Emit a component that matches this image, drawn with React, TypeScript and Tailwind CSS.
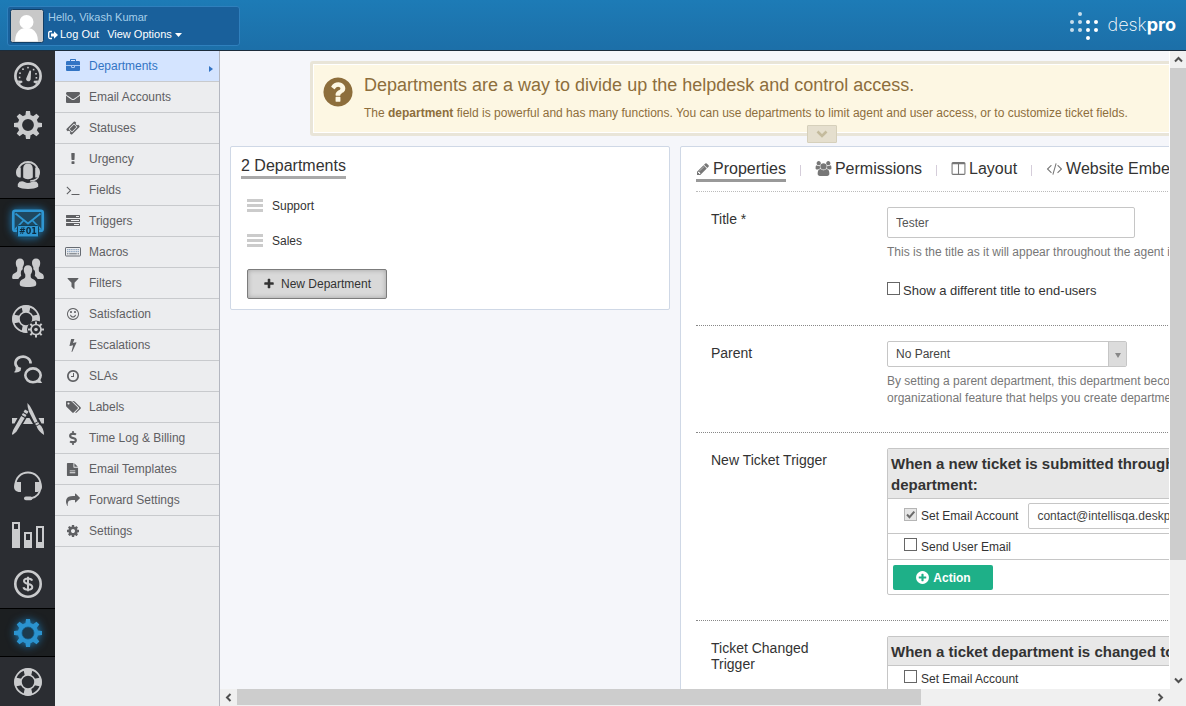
import React, { useState } from "react";
import { FaDollarSign } from "react-icons/fa";

const DISC =
  "M1664 896q0 209-103 385.5t-279.5 279.5-385.5 103-385.5-103-279.5-279.5-103-385.5 103-385.5 279.5-279.5 385.5-103 385.5 103 279.5 279.5 103 385.5z";

const PATHS = {
  briefcase:
    "M640 256h512v-128h-512v128zm1152 640v480q0 66-47 113t-113 47h-1472q-66 0-113-47t-47-113v-480h672v160q0 26 19 45t45 19h320q26 0 45-19t19-45v-160h672zm-768 0v128h-256v-128h256zm768-480v384h-1792v-384q0-66 47-113t113-47h352v-160q0-40 28-68t68-28h576q40 0 68 28t28 68v160h352q66 0 113 47t47 113z",
  envelope:
    "M1792 710v794q0 66-47 113t-113 47h-1472q-66 0-113-47t-47-113v-794q44 49 101 87 362 246 497 345 57 42 92.5 65.5t94.5 48 110 24.5h2q51 0 110-24.5t94.5-48 92.5-65.5q170-123 498-345 57-39 100-87zm0-294q0 79-49 151t-122 123q-376 261-468 325-10 7-42.5 31t-54 38.5-52 32.5-57.5 27-50 9h-2q-23 0-50-9t-57.5-27-52-32.5-54-38.5-42.5-31q-91-64-262-182.5t-205-142.5q-62-42-117-115.5t-55-136.5q0-78 41.5-130t118.5-52h1472q65 0 112.5 47t47.5 113z",
  ticket:
    "M1024 452l316 316-572 572-316-316zm-211 979l618-618q19-19 19-45t-19-45l-362-362q-18-18-45-18t-45 18l-618 618q-19 19-19 45t19 45l362 362q18 18 45 18t45-18zm889-637l-907 908q-37 37-90.5 37t-90.5-37l-126-126q56-56 56-136t-56-136-136-56-136 56l-125-126q-37-37-37-90.5t37-90.5l907-906q37-37 90.5-37t90.5 37l125 125q-56 56-56 136t56 136 136 56 136-56l126 125q37 37 37 90.5t-37 90.5z",
  exclamation:
    "M1088 1248v224q0 26-19 45t-45 19h-256q-26 0-45-19t-19-45v-224q0-26 19-45t45-19h256q26 0 45 19t19 45zm30-1056l-28 768q-1 26-20.5 45t-45.5 19h-256q-26 0-45.5-19t-20.5-45l-28-768q-1-26 17.5-45t44.5-19h320q26 0 44.5 19t17.5 45z",
  terminal:
    "M649 983l-466 466q-10 10-23 10t-23-10l-50-50q-10-10-10-23t10-23l393-393-393-393q-10-10-10-23t10-23l50-50q10-10 23-10t23 10l466 466q10 10 10 23t-10 23zm1079 457v64q0 14-9 23t-23 9h-960q-14 0-23-9t-9-23v-64q0-14 9-23t23-9h960q14 0 23 9t9 23z",
  tasks:
    "M1024 1408h640v-128h-640v128zm-384-512h1024v-128h-1024v128zm640-512h384v-128h-384v128zm512 832v256q0 26-19 45t-45 19h-1664q-26 0-45-19t-19-45v-256q0-26 19-45t45-19h1664q26 0 45 19t19 45zm0-512v256q0 26-19 45t-45 19h-1664q-26 0-45-19t-19-45v-256q0-26 19-45t45-19h1664q26 0 45 19t19 45zm0-512v256q0 26-19 45t-45 19h-1664q-26 0-45-19t-19-45v-256q0-26 19-45t45-19h1664q26 0 45 19t19 45z",
  filter:
    "M1595 295q17 41-14 70l-493 493v742q0 42-39 59-13 5-25 5-27 0-45-19l-256-256q-19-19-19-45v-486l-493-493q-31-29-14-70 17-39 59-39h1280q42 0 59 39z",
  smile:
    "M1262 1075q-37 121-138 195t-228 74-228-74-138-195q-8-25 4-48.5t38-31.5q25-8 48.5 4t31.5 38q25 80 92.5 129.5t151.5 49.5 151.5-49.5 92.5-129.5q8-26 32-38t49-4 37 31.5 4 48.5zm-494-435q0 53-37.5 90.5t-90.5 37.5-90.5-37.5-37.5-90.5 37.5-90.5 90.5-37.5 90.5 37.5 37.5 90.5zm512 0q0 53-37.5 90.5t-90.5 37.5-90.5-37.5-37.5-90.5 37.5-90.5 90.5-37.5 90.5 37.5 37.5 90.5zm256 256q0-130-51-248.5t-136.5-204-204-136.5-248.5-51-248.5 51-204 136.5-136.5 204-51 248.5 51 248.5 136.5 204 204 136.5 248.5 51 248.5-51 204-136.5 136.5-204 51-248.5zm128 0q0 209-103 385.5t-279.5 279.5-385.5 103-385.5-103-279.5-279.5-103-385.5 103-385.5 279.5-279.5 385.5-103 385.5 103 279.5 279.5 103 385.5z",
  bolt:
    "M1333 566q18 20 7 44l-540 1157q-13 25-42 25-4 0-14-2-17-5-25.5-19t-4.5-30l197-808-406 101q-4 1-12 1-18 0-31-11-18-15-13-39l201-825q4-14 16-23t28-9h328q19 0 32 12.5t13 29.5q0 8-5 18l-171 463 396-98q8-2 12-2 19 0 34 15z",
  clock:
    "M1024 544v448q0 14-9 23t-23 9h-320q-14 0-23-9t-9-23v-64q0-14 9-23t23-9h224v-352q0-14 9-23t23-9h64q14 0 23 9t9 23zm416 352q0-148-73-273t-198-198-273-73-273 73-198 198-73 273 73 273 198 198 273 73 273-73 198-198 73-273zm224 0q0 209-103 385.5t-279.5 279.5-385.5 103-385.5-103-279.5-279.5-103-385.5 103-385.5 279.5-279.5 385.5-103 385.5 103 279.5 279.5 103 385.5z",
  tags:
    "M576 448q0-53-37.5-90.5t-90.5-37.5-90.5 37.5-37.5 90.5 37.5 90.5 90.5 37.5 90.5-37.5 37.5-90.5zm1067 576q0 53-37 90l-491 492q-39 37-91 37-53 0-90-37l-715-716q-38-37-64.5-101t-26.5-117v-416q0-52 38-90t90-38h416q53 0 117 26.5t102 64.5l715 714q37 39 37 91zm384 0q0 53-37 90l-491 492q-39 37-91 37-36 0-59-14t-53-45l470-470q37-37 37-90 0-52-37-91l-715-714q-38-38-102-64.5t-117-26.5h224q53 0 117 26.5t102 64.5l715 714q37 39 37 91z",
  file:
    "M1596 476q14 14 28 36h-472v-472q22 14 36 28zm-476 164h544v1056q0 40-28 68t-68 28h-1344q-40 0-68-28t-28-68v-1600q0-40 28-68t68-28h800v544q0 40 28 68t68 28zm160 736v-64q0-14-9-23t-23-9h-704q-14 0-23 9t-9 23v64q0 14 9 23t23 9h704q14 0 23-9t9-23zm0-256v-64q0-14-9-23t-23-9h-704q-14 0-23 9t-9 23v64q0 14 9 23t23 9h704q14 0 23-9t9-23z",
  share:
    "M1792 640q0 26-19 45l-512 512q-19 19-45 19t-45-19-19-45v-256h-224q-98 0-175.5 6t-154 21.5-133 42.5-105.5 69.5-80 101-48.5 138.5-17.5 181q0 55 5 123 0 6 2.5 23.5t2.5 26.5q0 15-8.5 25t-23.5 10q-16 0-28-17-7-9-13-22t-13.5-30-10.5-24q-127-285-127-451 0-199 53-333 162-403 875-403h224v-256q0-26 19-45t45-19 45 19l512 512q19 19 19 45z",
  cog:
    "M1152 896q0-106-75-181t-181-75-181 75-75 181 75 181 181 75 181-75 75-181zm512-109v222q0 12-8 23t-20 13l-185 28q-19 54-39 91 35 50 107 138 10 12 10 25t-9 23q-27 37-99 108t-94 71q-12 0-26-9l-138-108q-44 23-91 38-16 136-29 186-7 28-36 28h-222q-14 0-24.5-8.5t-11.5-21.5l-28-184q-49-16-90-37l-141 107q-10 9-25 9-14 0-25-11-126-114-165-168-7-10-7-23 0-12 8-23 15-21 51-66.5t54-70.5q-27-50-41-99l-183-27q-13-2-21-12.5t-8-23.5v-222q0-12 8-23t19-13l186-28q14-46 39-92-40-57-107-138-10-12-10-24 0-10 9-23 26-36 98.5-107.5t94.5-71.5q13 0 26 10l138 107q44-23 91-38 16-136 29-186 7-28 36-28h222q14 0 24.5 8.5t11.5 21.5l28 184q49 16 90 37l142-107q9-9 24-9 13 0 25 10 129 119 165 170 7 8 7 22 0 12-8 23-15 21-51 66.5t-54 70.5q26 50 41 98l183 28q13 2 21 12.5t8 23.5z",
  question:
    "M1024 1376v-192q0-14-9-23t-23-9h-192q-14 0-23 9t-9 23v192q0 14 9 23t23 9h192q14 0 23-9t9-23zm256-672q0-88-55.5-163t-138.5-116-170-41q-243 0-371 213-15 24 8 42l132 100q7 6 19 6 16 0 25-12 53-68 86-92 34-24 86-24 48 0 85.5 26t37.5 59q0 38-20 61t-68 45q-63 28-115.5 86.5t-52.5 125.5v36q0 14 9 23t23 9h192q14 0 23-9t9-23q0-19 21.5-49.5t54.5-49.5q32-18 49-28.5t46-35 44.5-48 28-60.5 12.5-81z" +
    DISC,
  plusCircle:
    "M1344 960v-128q0-26-19-45t-45-19h-256v-256q0-26-19-45t-45-19h-128q-26 0-45 19t-19 45v256h-256q-26 0-45 19t-19 45v128q0 26 19 45t45 19h256v256q0 26 19 45t45 19h128q26 0 45-19t19-45v-256h256q26 0 45-19t19-45z" +
    DISC,
  plus:
    "M1600 736v192q0 40-28 68t-68 28h-416v416q0 40-28 68t-68 28h-192q-40 0-68-28t-28-68v-416h-416q-40 0-68-28t-28-68v-192q0-40 28-68t68-28h416v-416q0-40 28-68t68-28h192q40 0 68 28t28 68v416h416q40 0 68 28t28 68z",
  pencil:
    "M491 1536l91-91-235-235-91 91v107h128v128h107zm523-928q0-22-22-22-10 0-17 7l-542 542q-7 7-7 17 0 22 22 22 10 0 17-7l542-542q7-7 7-17zm-54-192l416 416-832 832h-416v-416zm683 96q0 53-37 90l-166 166-416-416 166-165q36-38 90-38 53 0 91 38l235 234q37 39 37 91z",
  users:
    "M657 896q-162 5-265 128h-134q-82 0-138-40.5t-56-118.5q0-353 124-353 6 0 43.5 21t97.5 42.5 119 21.5q67 0 133-23-5 37-5 66 0 139 81 256zm1071 637q0 120-73 189.5t-194 69.5h-874q-121 0-194-69.5t-73-189.5q0-53 3.5-103.5t14-109 26.5-108.5 43-97.5 62-81 85.5-53.5 111.5-20q10 0 43 21.5t73 48 107 48 135 21.5 135-21.5 107-48 73-48 43-21.5q61 0 111.5 20t85.5 53.5 62 81 43 97.5 26.5 108.5 14 109 3.5 103.5zm-1024-1277q0 106-75 181t-181 75-181-75-75-181 75-181 181-75 181 75 75 181zm704 384q0 159-112.5 271.5t-271.5 112.5-271.5-112.5-112.5-271.5 112.5-271.5 271.5-112.5 271.5 112.5 112.5 271.5zm576 225q0 78-56 118.5t-138 40.5h-134q-103-123-265-128 81-117 81-256 0-29-5-66 66 23 133 23 59 0 119-21.5t97.5-42.5 43.5-21q124 0 124 353zm-128-609q0 106-75 181t-181 75-181-75-75-181 75-181 181-75 181 75 75 181z",
  columns:
    "M224 1536h608v-1152h-640v1120q0 13 9.5 22.5t22.5 9.5zm1376-32v-1120h-640v1152h608q13 0 22.5-9.5t9.5-22.5zm128-1216v1216q0 66-47 113t-113 47h-1344q-66 0-113-47t-47-113v-1216q0-66 47-113t113-47h1344q66 0 113 47t47 113z",
  code:
    "M681 1399l-50 50q-10 10-23 10t-23-10l-466-466q-10-10-10-23t10-23l466-466q10-10 23-10t23 10l50 50q10 10 10 23t-10 23l-393 393 393 393q10 10 10 23t-10 23zm591-1067l-373 1291q-4 13-15.5 19.5t-23.5 2.5l-62-17q-13-4-19.5-15.5t-2.5-24.5l373-1291q4-13 15.5-19.5t23.5-2.5l62 17q13 4 19.5 15.5t2.5 24.5zm657 651l-466 466q-10 10-23 10t-23-10l-50-50q-10-10-10-23t10-23l393-393-393-393q-10-10-10-23t10-23l50-50q10-10 23-10t23 10l466 466q10 10 10 23t-10 23z",
};

type GlyphName = keyof typeof PATHS;
const WIDE: GlyphName[] = ["tags", "users", "code"];

function Glyph({ name, className = "size-[14px]" }: { name: GlyphName; className?: string }) {
  const w = WIDE.includes(name) ? 2048 : 1792;
  return (
    <svg viewBox={`0 0 ${w} 1792`} className={`${className} shrink-0`} fill="currentColor" aria-hidden="true">
      <path d={PATHS[name]} />
    </svg>
  );
}

function KeyboardGlyph() {
  return (
    <svg viewBox="0 0 16 10" className="h-[10px] w-[16px] shrink-0" fill="none" aria-hidden="true">
      <rect x="0.5" y="0.5" width="15" height="8.5" rx="0.6" stroke="#666b72" />
      <path d="M2 2.7h12M2 4.7h12" stroke="#7f99b8" strokeDasharray="1.3 0.5" />
      <path d="M2 6.8h1.4M4.2 6.8h7.6M12.6 6.8h1.4" stroke="#666b72" />
    </svg>
  );
}

const NAV: { label: string; icon: React.ReactNode }[] = [
  { label: "Departments", icon: <Glyph name="briefcase" /> },
  { label: "Email Accounts", icon: <Glyph name="envelope" /> },
  { label: "Statuses", icon: <Glyph name="ticket" /> },
  { label: "Urgency", icon: <Glyph name="exclamation" /> },
  { label: "Fields", icon: <Glyph name="terminal" /> },
  { label: "Triggers", icon: <Glyph name="tasks" /> },
  { label: "Macros", icon: <KeyboardGlyph /> },
  { label: "Filters", icon: <Glyph name="filter" /> },
  { label: "Satisfaction", icon: <Glyph name="smile" /> },
  { label: "Escalations", icon: <Glyph name="bolt" /> },
  { label: "SLAs", icon: <Glyph name="clock" /> },
  { label: "Labels", icon: <Glyph name="tags" className="h-[14px] w-[16px]" /> },
  { label: "Time Log & Billing", icon: <FaDollarSign className="size-[14px]" /> },
  { label: "Email Templates", icon: <Glyph name="file" className="size-[13px]" /> },
  { label: "Forward Settings", icon: <Glyph name="share" /> },
  { label: "Settings", icon: <Glyph name="cog" /> },
];

function RailSvg({ children, className = "" }: { children: React.ReactNode; className?: string }) {
  return (
    <svg viewBox="0 0 32 32" className={`size-8 overflow-visible ${className}`} fill="currentColor" aria-hidden="true">
      {children}
    </svg>
  );
}

const EIGHTHS = [0, 45, 90, 135, 180, 225, 270, 315];
const QUARTERS = [0, 90, 180, 270];

function GearShape({ fill = "currentColor" }: { fill?: string }) {
  return (
    <>
      <circle cx="16" cy="16" r="8.1" fill="none" stroke={fill} strokeWidth="4.4" />
      {EIGHTHS.map((a) => (
        <path key={a} d="M13.2 7.5L14 2h4l.8 5.5z" fill={fill} transform={`rotate(${a} 16 16)`} />
      ))}
    </>
  );
}

function RingShape() {
  return (
    <>
      <circle cx="16" cy="16" r="13" fill="none" stroke="currentColor" strokeWidth="1.8" />
      <circle cx="16" cy="16" r="7" fill="none" stroke="currentColor" strokeWidth="1.6" />
      {QUARTERS.map((a) => (
        <path key={a} d="M11.4 3.2Q16 1.2 20.6 3.2L19.2 9.6Q16 8.2 12.8 9.6z" transform={`rotate(${a} 16 16)`} />
      ))}
    </>
  );
}

const RAIL_TOP: { label: string; active?: boolean; icon: React.ReactNode }[] = [
  {
    label: "Dashboard",
    icon: (
      <RailSvg>
        <circle cx="16" cy="16" r="12.6" fill="none" stroke="currentColor" strokeWidth="2.7" />
        <path d="M17.6 10.4l1.5.3-.4 8.1a2.3 2.3 0 1 1-4.3-.9z" />
        {[
          [16, 7.6], [11, 9.2], [21.6, 9.6], [8, 13.2], [24, 13.8], [7.6, 17.4], [24.4, 17.8],
        ].map(([x, y]) => (
          <rect key={`${x}-${y}`} x={x - 0.8} y={y - 0.8} width="1.6" height="1.6" />
        ))}
        <path d="M5.500 20.400l4.500.4.600 1.400-3 1.800zM26.500 20.400l-4.500.4-.600 1.400 3 1.800z" />
      </RailSvg>
    ),
  },
  { label: "Setup", icon: <RailSvg><GearShape /></RailSvg> },
  {
    label: "Agents",
    icon: (
      <RailSvg>
        <path d="M5.800 12a10.500 10.500 0 0 1 20.400 0" fill="none" stroke="currentColor" strokeWidth="1.800" />
        <path d="M8.800 9.500v10H7Q4 18.500 4 14.500t2.500-5zM23.200 9.500v10H25q3-1 3-5t-2.500-5z" />
        <path d="M16 5.500c3.600 0 4.800 2.600 4.800 5.600v8.400q-1.500 1.800-4.800 1.800t-4.800-1.800v-8.400c0-3 1.200-5.600 4.800-5.600z" />
        <path d="M26.600 18c-.6 3-3.800 4.600-8.400 5" fill="none" stroke="currentColor" strokeWidth="1.400" />
        <path d="M7.500 23.800q3-1.200 5 .2 3.500 2 7 0 2-1.400 5-.2 2.200 1.600 1.700 5-3.700 2.200-10.200 2.200t-10.200-2.200q-.5-3.400 1.700-5z" />
      </RailSvg>
    ),
  },
  {
    label: "Tickets",
    active: true,
    icon: (
      <RailSvg className="text-[#2e96d2] drop-shadow-[0_0_4px_#1c7fbd]">
        <rect x="1.300" y="3.800" width="29.400" height="20" rx="1.800" fill="#1f485f" stroke="currentColor" strokeWidth="2.600" />
        <path d="M3.500 6.500L16 16.500 28.500 6.500M3 22.500l8.500-9M29 22.500l-8.500-9" fill="none" stroke="currentColor" strokeWidth="1.800" />
        <rect x="5.500" y="18.500" width="21" height="11.500" rx="1" fill="#2e96d2" stroke="#10415c" />
        <text x="16" y="27.200" textAnchor="middle" fontSize="8" fontWeight="700" fontFamily="'DejaVu Sans', sans-serif" fill="#0c2c40">#01</text>
      </RailSvg>
    ),
  },
  {
    label: "People",
    icon: (
      <RailSvg>
        <path d="M8 2.500c2.600 0 4 1.800 4 4.300 0 2-.7 3.500-1.300 4.300v2.100c-1.800.9-2.300 3-1.500 6.600-1.400 1.300-2.400 2.200-2.800 3.200H1.200C0 23 0 21.500.3 20c.6-3.200 4.900-2.900 4.900-5.400v-3C4.300 10.500 3.800 9 3.800 6.800 3.800 4.300 5.400 2.500 8 2.500z" />
        <path d="M24 2.500c-2.600 0-4 1.800-4 4.300 0 2 .7 3.500 1.300 4.300v2.100c1.800.9 2.300 3 1.500 6.600 1.400 1.300 2.400 2.200 2.800 3.200h5.200c1.200 0 1.200-1.500.9-3-.6-3.200-4.900-2.900-4.900-5.400v-3c.9-1.100 1.400-2.600 1.400-4.800 0-2.500-1.600-4.300-4.200-4.300z" />
        <path d="M16 9.200c2.700 0 4.200 1.900 4.200 4.600 0 2-.7 3.700-1.500 4.700v2.300c0 2.400 5 2.200 5.500 6 .2 1.600 0 2.700-1 3.100-1.800.7-4 1-7.200 1s-5.400-.3-7.200-1c-1-.4-1.200-1.500-1-3.100.5-3.800 5.500-3.600 5.500-6v-2.300c-.8-1-1.500-2.700-1.500-4.700 0-2.700 1.500-4.600 4.200-4.600z" />
      </RailSvg>
    ),
  },
  {
    label: "Portal",
    icon: (
      <RailSvg>
        <g transform="translate(-2 -2)">
          <RingShape />
        </g>
        <circle cx="24" cy="24.500" r="9" fill="#2b2d32" />
        <circle cx="24" cy="24.500" r="5" fill="none" stroke="currentColor" strokeWidth="1.700" />
        <circle cx="24" cy="24.500" r="1.800" />
        {EIGHTHS.map((a) => (
          <rect key={a} x="23" y="16.500" width="2" height="3" transform={`rotate(${a} 24 24.500)`} />
        ))}
      </RailSvg>
    ),
  },
  {
    label: "Chat",
    icon: (
      <RailSvg>
        <path d="M18.600 9.500A7.600 6.400 0 1 0 5.500 13.500" fill="none" stroke="currentColor" strokeWidth="2.600" />
        <path d="M4 11.500l2.800 1.500 2.400.8-.6 3Q6 19 2 18.200q2-1.600 1.600-3.600z" />
        <ellipse cx="21" cy="21.300" rx="7.700" ry="6.900" fill="none" stroke="currentColor" strokeWidth="2.600" />
        <path d="M28.200 24.500q0 3 2 4.300-3.700 1-6.700-1.200z" />
      </RailSvg>
    ),
  },
  {
    label: "Apps",
    icon: (
      <RailSvg>
        <path d="M0 15h5.500l-3 5.500H0zM26.500 15H32v5.500h-2.500zM14.500 15h3l3.500 6h-10z" />
        <path d="M15.400 0q3.200 3 5 7.400l5.200 11-2.900 1.500-5.600-11Q15.200 4 15.400 0zM23.100 20.700l3.100-1.600 1 1.900-3.100 1.500zM24.500 23.200l3.100-1.600q4 3.200 4.500 10.400-5.600-3.400-7.600-8.800z" />
        <path d="M13 6.500l3.500 2-1.500 2.600-3.500-2zM11 10l3.500 2-1.200 2-3.500-2zM9.200 13l3.500 2-8.300 13.800L.5 32 0 30.500l1.300-3.700z" />
      </RailSvg>
    ),
  },
];

const RAIL_BOTTOM: typeof RAIL_TOP = [
  {
    label: "Agent interface",
    icon: (
      <RailSvg>
        <path d="M3.500 14.500a12.500 12 0 0 1 25 0" fill="none" stroke="currentColor" strokeWidth="1.800" />
        <path d="M28.300 17c0 6.500-4 10.600-10.300 11.600" fill="none" stroke="currentColor" strokeWidth="1.800" />
        <path d="M9 12v10H6.500Q2 21 2 17t2-5zM23 12v10h2.500q4.500-1 4.500-5t-2-5z" />
        <rect x="12" y="26.400" width="8.500" height="3.800" rx="1.900" />
      </RailSvg>
    ),
  },
  {
    label: "Reports",
    icon: (
      <RailSvg>
        <path fillRule="evenodd" d="M0 3h8v26H0zM2 5v5h4V5zM12 13h8v16h-8zM14 15v6h4v-6zM24 7h8v22h-8zM26 9v14h4V9z" />
      </RailSvg>
    ),
  },
  {
    label: "Billing",
    icon: (
      <RailSvg>
        <circle cx="16" cy="16" r="12.700" fill="none" stroke="currentColor" strokeWidth="2.600" />
        <path d="M20.200 12.600c-.6-1.500-2-2.200-4.200-2.200-2.500 0-4 1-4 2.700 0 1.800 1.500 2.300 4 2.800 2.700.5 4.300 1.200 4.300 3.100s-1.700 2.800-4.300 2.800c-2.500 0-4.100-.8-4.600-2.500M16 8.700v14.600" fill="none" stroke="currentColor" strokeWidth="2" />
      </RailSvg>
    ),
  },
  {
    label: "Admin",
    active: true,
    icon: (
      <RailSvg className="drop-shadow-[0_0_4px_#1c7fbd]">
        <GearShape fill="#2b93cf" />
        <circle cx="16" cy="16" r="6" fill="#1d3b4d" stroke="#155a84" strokeWidth="0.800" />
      </RailSvg>
    ),
  },
  { label: "Help", icon: <RailSvg><RingShape /></RailSvg> },
];

function RailButton({ item }: { item: (typeof RAIL_TOP)[number] }) {
  return (
    <button
      type="button"
      aria-label={item.label}
      className={`flex h-[49px] w-full shrink-0 items-center justify-center text-[#cacbcd] ${
        item.active ? "border-y border-black bg-[#1c1f21]" : ""
      }`}
    >
      {item.icon}
    </button>
  );
}

function Header() {
  return (
    <header className="flex h-[51px] shrink-0 items-center justify-between border-b border-[#1c2c3b] bg-linear-to-b from-[#1d7bb6] to-[#1c6fa8] pt-[2px] pr-[10px] pl-[7px]">
      <div className="flex h-[40px] w-[233px] items-center gap-[4px] rounded-[3px] border border-[#2f80bd] bg-[#19609b] pl-[2px]">
        <svg viewBox="0 0 34 34" className="size-[34px] shrink-0" role="img" aria-label="Avatar">
          <rect x="0.500" y="0.500" width="33" height="33" rx="2" fill="#c8c8c8" stroke="#123f66" />
          <circle cx="16.500" cy="13" r="7" fill="#fff" />
          <path d="M5 32.500q0-9 6-12.500 5.500-2 11 0 6 3.500 6 12.500z" fill="#fff" />
        </svg>
        <div className="text-[11px] leading-[17px]">
          <div className="text-[#a6cfea]">Hello, Vikash Kumar</div>
          <div className="flex gap-[8px] text-white">
            <a href="#logout" className="flex items-center gap-[2px]">
              <svg viewBox="0 0 10 10" className="size-[10px]" aria-hidden="true">
                <path d="M4 1.500H2Q.7 1.500.7 3v4Q.7 8.500 2 8.500h2" fill="none" stroke="#fff" strokeWidth="1.300" />
                <path d="M3 3.500h3V1.200L10 5 6 8.800V6.500H3z" fill="#fff" />
              </svg>
              Log Out
            </a>
            <button type="button" className="flex items-center gap-[3px]">
              View Options
              <svg viewBox="0 0 7 4" className="h-[4px] w-[7px]" aria-hidden="true">
                <path d="M0 0h7L3.500 4z" fill="#fff" />
              </svg>
            </button>
          </div>
        </div>
      </div>
      <div className="flex items-center gap-[8px] text-white">
        <svg viewBox="0 0 30 28" className="h-[28px] w-[30px]" fill="#fff" aria-hidden="true">
          <g opacity="0.750">
            <circle cx="11" cy="2" r="2" />
            <circle cx="3" cy="10" r="2" />
            <circle cx="11" cy="10" r="2" />
            <circle cx="3" cy="18" r="2" />
            <circle cx="11" cy="18" r="2" />
          </g>
          <circle cx="19" cy="10" r="2" />
          <circle cx="27" cy="10" r="2" />
          <circle cx="19" cy="18" r="2" />
          <circle cx="27" cy="18" r="2" />
          <circle cx="19" cy="26" r="2" />
        </svg>
        <span className="-mt-[3px] font-['Inter',sans-serif] text-[18px] leading-[24px] font-extralight">
          desk<b className="font-bold">pro</b>
        </span>
      </div>
    </header>
  );
}

function Sidebar() {
  return (
    <nav aria-label="Ticket settings" className="w-[165px] shrink-0 border-r border-[#b4b7c0] bg-[#ecedef]">
      {NAV.map((item, i) => (
        <a
          key={item.label}
          href="#section"
          className={`flex h-[31px] items-center gap-[8px] border-b border-[#c8cacd] pr-[6px] pl-[9px] text-[12px] ${
            i === 0 ? "bg-[#d4e4ff] text-[#3274c4]" : "text-[#5f6063]"
          }`}
        >
          <span className="flex w-[17px] justify-center">{item.icon}</span>
          <span className="flex-1">{item.label}</span>
          {i === 0 && (
            <svg viewBox="0 0 4 6" className="mt-[5px] h-[6px] w-[4px]" fill="currentColor" aria-hidden="true">
              <path d="M0 0l4 3-4 3z" />
            </svg>
          )}
        </a>
      ))}
    </nav>
  );
}

function Check({
  label,
  defaultChecked,
  muted,
  className = "gap-[4px]",
}: {
  label: string;
  defaultChecked?: boolean;
  muted?: boolean;
  className?: string;
}) {
  const [on, setOn] = useState(!!defaultChecked);
  return (
    <label className={`flex w-fit items-center ${className}`}>
      <span className="relative mb-[4px] flex size-[13px]">
        <input
          type="checkbox"
          checked={on}
          onChange={(e) => setOn(e.target.checked)}
          className={`size-[13px] appearance-none border ${muted ? "border-[#b5b5b5] bg-[#e6e6e6]" : "border-[#666] bg-white"}`}
        />
        {on && (
          <svg viewBox="0 0 13 13" className="pointer-events-none absolute inset-0 size-[13px]" aria-hidden="true">
            <path d="M3 6.500l2.500 2.700L10.300 3.600" fill="none" stroke="#6b6b6b" strokeWidth="2" />
          </svg>
        )}
      </span>
      {label}
    </label>
  );
}

function Banner() {
  return (
    <section className="relative mt-[10px] ml-[90px] flex h-[75px] w-[1024px] gap-[9px] rounded-[3px] border-[3px] border-[#e9e5d8] bg-[#fdf7e3] pt-[10px] pl-[8px] text-[#8d6e3c] inset-ring inset-ring-white">
      <Glyph name="question" className="mt-px size-[34px]" />
      <div>
        <h1 className="text-[18px] leading-[22px]">Departments are a way to divide up the helpdesk and control access.</h1>
        <p className="mt-[9px] text-[12px] leading-[16px]">
          The <b>department</b> field is powerful and has many functions. You can use departments to limit agent and user access, or to customize ticket fields.
        </p>
      </div>
      <button
        type="button"
        aria-label="Expand"
        className="absolute -bottom-[10px] left-1/2 flex h-[18px] w-[30px] -translate-x-1/2 items-center justify-center rounded-[1px] border border-[#d6d0bb] bg-[#e5dfce]"
      >
        <svg viewBox="0 0 12 8" className="h-[8px] w-[12px]" aria-hidden="true">
          <path d="M1.500 1.500L6 6l4.500-4.500" fill="none" stroke="#c4bb9d" strokeWidth="2.600" />
        </svg>
      </button>
    </section>
  );
}

function DepartmentList() {
  return (
    <section className="h-[164px] w-[440px] shrink-0 rounded-[2px] border border-[#cfd8e6] bg-white px-[10px] pt-[8px] text-[12px] text-[#333]">
      <h2 className="w-fit border-b-[3px] border-[#a9a9a9] text-[16px] leading-[21px]">2 Departments</h2>
      <ul className="mt-[9px] pl-[6px]">
        {["Support", "Sales"].map((d) => (
          <li key={d} className="flex h-[35px] items-center gap-[9px]">
            <svg viewBox="0 0 16 13" className="h-[13px] w-[16px]" fill="#cbcbcb" aria-hidden="true">
              <path d="M0 0h16v3H0zM0 5h16v3H0zM0 10h16v3H0z" />
            </svg>
            <a href="#department">{d}</a>
          </li>
        ))}
      </ul>
      <button
        type="button"
        className="mt-[11px] ml-[6px] flex h-[30px] w-[140px] items-center justify-center gap-[6px] rounded-[2px] border border-[#7c7c7c] bg-[#d9d9d9] shadow-[inset_0_0_5px_rgba(0,0,0,0.25)]"
      >
        <Glyph name="plus" className="size-[12px]" />
        New Department
      </button>
    </section>
  );
}

function Tabs() {
  const tabs: { label: string; icon: React.ReactNode }[] = [
    { label: "Properties", icon: <Glyph name="pencil" /> },
    { label: "Permissions", icon: <Glyph name="users" className="h-[15px] w-[17px]" /> },
    { label: "Layout", icon: <Glyph name="columns" className="size-[15px]" /> },
    { label: "Website Embed", icon: <Glyph name="code" className="h-[15px] w-[17px]" /> },
  ];
  return (
    <div className="flex h-[45px] border-b border-dotted border-[#bbb] pt-[10px] text-[16px]">
      {tabs.map((t, i) => (
        <React.Fragment key={t.label}>
          {i > 0 && <span className="mx-[14px] mt-[8px] h-[11px] w-px bg-[#d5cdda]" />}
          <button
            type="button"
            className={`flex h-[25px] items-center gap-[3px] border-b-[3px] pt-px whitespace-nowrap text-[#333] ${
              i === 0 ? "border-[#999]" : "border-transparent"
            }`}
          >
            <span className="text-[#777]">{t.icon}</span>
            {t.label}
          </button>
        </React.Fragment>
      ))}
    </div>
  );
}

function Row({ label, children, htmlFor, className }: { label: string; children: React.ReactNode; htmlFor?: string; className: string }) {
  const text = "block w-[130px] pt-[4px] text-[14px] leading-[16px]";
  return (
    <div className={`flex border-b border-dotted border-[#888] pt-[15px] pl-[15px] ${className}`}>
      <div className="w-[176px] shrink-0">
        {htmlFor ? <label htmlFor={htmlFor} className={text}>{label}</label> : <span className={text}>{label}</span>}
      </div>
      <div className="min-w-0 flex-1 text-[12px]">{children}</div>
    </div>
  );
}

function TriggerBox({ title, children }: { title: string; children: React.ReactNode }) {
  return (
    <div className="w-[480px] rounded-[2px] border border-[#c6c6c6]">
      <h3 className="border-b border-[#c6c6c6] bg-[#e8e8e8] px-[3px] pt-[4px] pb-[3px] text-[15px] leading-[21px] font-bold">{title}</h3>
      {children}
    </div>
  );
}

function Properties() {
  return (
    <section className="min-w-0 flex-1 rounded-[2px] border border-[#cfd8e6] bg-white pl-[15px] text-[#333]">
      <Tabs />
      <Row label="Title *" htmlFor="title" className="h-[134px]">
        <input
          id="title"
          defaultValue="Tester"
          className="block h-[31px] w-[248px] rounded-[2px] border border-[#c6c6c6] bg-white px-[8px] text-[#555]"
        />
        <p className="mt-[6px] mb-[20px] leading-[17px] text-[#777]">This is the title as it will appear throughout the agent interface.</p>
        <Check label="Show a different title to end-users" className="gap-[3px] text-[13px]" />
      </Row>
      <Row label="Parent" htmlFor="parent" className="h-[107px]">
        <div className="relative w-[240px]">
          <select id="parent" className="block h-[26px] w-full appearance-none rounded-[2px] border border-[#c6c6c6] bg-white px-[8px] text-[#444]">
            <option>No Parent</option>
            <option>Support</option>
            <option>Sales</option>
          </select>
          <span className="pointer-events-none absolute inset-y-px right-px flex w-[18px] items-center justify-center border-l border-[#c6c6c6] bg-[#dcdcdc]">
            <svg viewBox="0 0 6 5" className="mt-[2px] h-[5px] w-[6px]" aria-hidden="true">
              <path d="M0 0h6L3 5z" fill="#888" />
            </svg>
          </span>
        </div>
        <p className="mt-[6px] w-[480px] leading-[17px] text-[#777]">
          By setting a parent department, this department becomes a child. This is an
          <br />
          organizational feature that helps you create department structures.
        </p>
      </Row>
      <Row label="New Ticket Trigger" className="h-[188px]">
        <TriggerBox title="When a new ticket is submitted through the portal with this department:">
          <div className="flex h-[35px] items-center gap-[10px] border-b border-[#c6c6c6] pl-[16px]">
            <Check label="Set Email Account" defaultChecked muted />
            <select aria-label="Email account" className="h-[26px] w-[240px] appearance-none rounded-[2px] border border-[#c6c6c6] bg-white px-[8px] text-[#444]">
              <option>contact@intellisqa.deskpro.com</option>
            </select>
          </div>
          <div className="flex h-[26px] items-center border-b border-[#c6c6c6] pl-[16px]">
            <Check label="Send User Email" />
          </div>
          <div className="px-[5px] pt-[5px] pb-[4px]">
            <button type="button" className="flex h-[25px] w-[100px] items-center justify-center gap-[3px] rounded-[2px] bg-[#1eb088] font-bold text-white">
              <Glyph name="plusCircle" className="size-[15px]" />
              Action
            </button>
          </div>
        </TriggerBox>
      </Row>
      <Row label="Ticket Changed Trigger" className="h-[188px]">
        <TriggerBox title="When a ticket department is changed to this department:">
          <div className="flex h-[26px] items-center border-b border-[#c6c6c6] pl-[16px]">
            <Check label="Set Email Account" />
          </div>
          <div className="flex h-[26px] items-center pl-[16px]">
            <Check label="Send User Email" />
          </div>
        </TriggerBox>
      </Row>
    </section>
  );
}

function Arrow({ d }: { d: string }) {
  return (
    <svg viewBox="0 0 9 9" className="size-[9px]" aria-hidden="true">
      <path d={d} fill="none" stroke="#505050" strokeWidth="2" />
    </svg>
  );
}

export default function App() {
  return (
    <div className="flex h-screen flex-col overflow-hidden bg-[#f5f6fa] font-['Liberation_Sans',Arial,sans-serif]">
      <Header />
      <div className="flex min-h-0 flex-1">
        <aside className="flex w-[55px] shrink-0 flex-col overflow-hidden bg-[#2b2d32]">
          {RAIL_TOP.map((item) => (
            <RailButton key={item.label} item={item} />
          ))}
          <div className="h-[18px] shrink-0" />
          {RAIL_BOTTOM.map((item) => (
            <RailButton key={item.label} item={item} />
          ))}
        </aside>
        <Sidebar />
        <div className="flex min-w-0 flex-1 flex-col">
          <div className="flex min-h-0 flex-1">
            <main className="min-w-0 flex-1 overflow-hidden">
              <div className="w-[1271px]">
                <Banner />
                <div className="mt-[10px] flex gap-[10px] px-[10px]">
                  <DepartmentList />
                  <Properties />
                </div>
              </div>
            </main>
            <div className="flex w-[17px] shrink-0 flex-col items-center border-l border-white bg-[#f0f0f0]" aria-hidden="true">
              <div className="flex h-[17px] items-center justify-center">
                <Arrow d="M1 6.500l3.500-3.500L8 6.500" />
              </div>
              <div className="w-full flex-[492] bg-[#cdcdcd]" />
              <div className="flex-[112]" />
              <div className="flex h-[17px] items-center justify-center">
                <Arrow d="M1 2.500L4.500 6 8 2.500" />
              </div>
            </div>
          </div>
          <div className="flex h-[17px] shrink-0 items-stretch bg-[#f0f0f0] pr-[17px]" aria-hidden="true">
            <div className="flex w-[17px] items-center justify-center">
              <Arrow d="M6.500 1L3 4.500 6.500 8" />
            </div>
            <div className="mb-px flex-[684] bg-[#cdcdcd]" />
            <div className="flex-[231]" />
            <div className="flex w-[17px] items-center justify-center">
              <Arrow d="M2.500 1L6 4.500 2.500 8" />
            </div>
          </div>
        </div>
      </div>
    </div>
  );
}
